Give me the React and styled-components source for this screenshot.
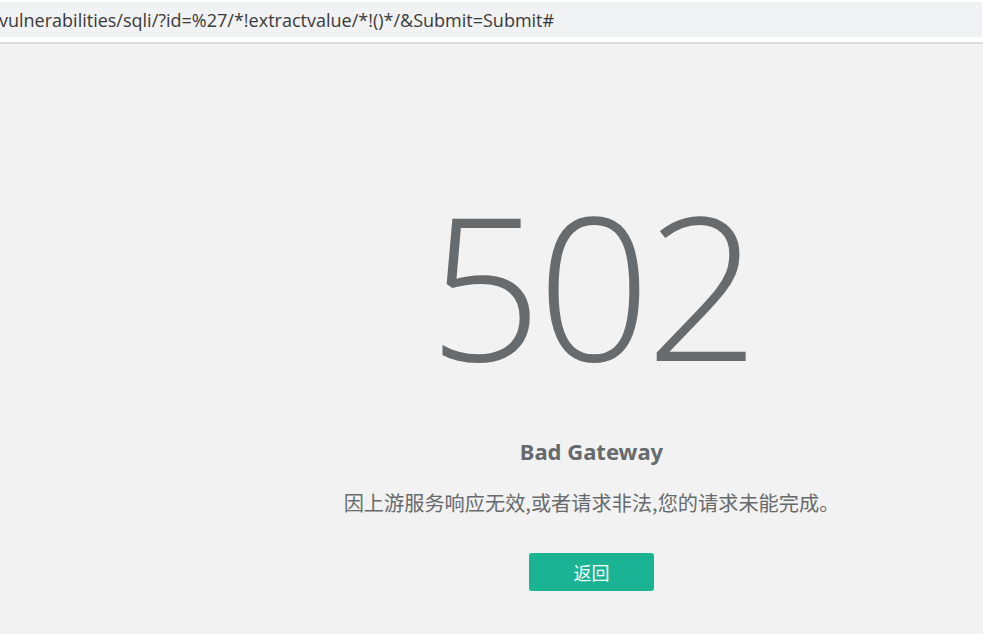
import React from "react";
import styled, { createGlobalStyle } from "styled-components";

const Global = createGlobalStyle`
  html, body { margin: 0; padding: 0; background: #f2f2f2; }
  body { overflow: hidden; width: 983px; height: 634px; }
`;

const Page = styled.div`
  width: 983px;
  height: 634px;
  display: flex;
  flex-direction: column;
  overflow: hidden;
  background: #f2f2f2;
`;

const TopBar = styled.div`
  background: #ffffff;
  padding-top: 2px;
  height: 44px;
  box-sizing: border-box;
  border-bottom: 2px solid #dadadf;
  flex: none;
`;

const AddressBox = styled.div`
  height: 35px;
  background: #f1f2f4;
  display: flex;
  align-items: center;
  overflow: hidden;
  white-space: nowrap;
  font-family: "Open Sans", "Noto Sans", sans-serif;
  font-size: 18px;
  color: #3a3a3a;
  margin-right: 1px;
  text-indent: -1px;
`;

const Stage = styled.div`
  flex: 1;
  display: flex;
  justify-content: center;
  width: 1183px;
`;

const Content = styled.div`
  display: flex;
  flex-direction: column;
  align-items: center;
  padding-top: 120px;
`;

const Code = styled.h1`
  margin: 0;
  font-family: "Open Sans", "Noto Sans", sans-serif;
  font-weight: 300;
  font-size: 199px;
  line-height: 240px;
  height: 240px;
  letter-spacing: -5px;
  color: #686b6e;
`;

const Title = styled.h3`
  margin: 34px 0 0;
  font-family: "Noto Sans", "Open Sans", sans-serif;
  font-weight: 700;
  font-size: 22px;
  line-height: 26px;
  color: #676a6c;
`;

const Message = styled.p`
  margin: 26px 0 0;
  font-family: "Noto Sans CJK SC", "Noto Sans", sans-serif;
  font-size: 20.2px;
  line-height: 26px;
  color: #676a6c;
`;

const BackButton = styled.a`
  margin-top: 37px;
  width: 125px;
  height: 38px;
  border-radius: 3px;
  background: #1ab394;
  color: #ffffff;
  display: flex;
  align-items: center;
  justify-content: center;
  font-family: "Noto Sans CJK SC", sans-serif;
  font-size: 18px;
  text-decoration: none;
`;

export default function App() {
  return (
    <Page>
      <Global />
      <TopBar>
        <AddressBox>vulnerabilities/sqli/?id=%27/*!extractvalue/*!()*/&amp;Submit=Submit#</AddressBox>
      </TopBar>
      <Stage>
        <Content>
          <Code>502</Code>
          <Title>Bad Gateway</Title>
          <Message>因上游服务响应无效,或者请求非法,您的请求未能完成。</Message>
          <BackButton href="#">返回</BackButton>
        </Content>
      </Stage>
    </Page>
  );
}
